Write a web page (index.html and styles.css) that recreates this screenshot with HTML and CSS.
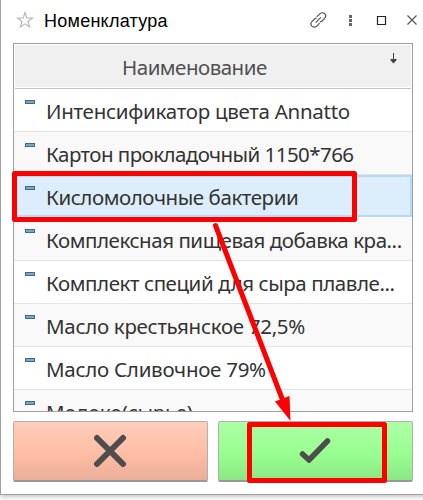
FILE: index.html
```html
<!DOCTYPE html>
<html lang="ru">
<head>
<meta charset="utf-8">
<title>Номенклатура</title>
<link rel="stylesheet" href="styles.css">
</head>
<body>
<main class="window">
  <header class="titlebar">
    <svg class="star" width="18" height="18" viewBox="0 0 18 18"><path d="M9 1.500l1.800 5.400 5.700.1-4.500 3.500 1.600 5.500L9 12.800 4.400 16 6 10.500 1.500 7 7.200 6.900z"/></svg>
    <h1 class="title">Номенклатура</h1>
    <svg class="tools" width="108" height="20" viewBox="0 0 108 20">
      <g class="link"><path d="M6.800 6.800l2.700-2.700c1.400-1.400 3.800-1.700 5.200-.4 1.300 1.400 1.100 3.500-.3 4.900l-2.400 2.400c-.7.6-1.400.9-2.200.9"/><path d="M9.700 13.200L7 15.900c-1.400 1.400-3.800 1.600-5.100.3-1.300-1.400-1.200-3.500.2-4.900L4.500 9c.7-.6 1.400-.9 2.200-.9"/><path d="M5.600 12.600l5.200-5.200"/></g>
      <path class="dots" d="M39 5h3v3h-3zM39 9h3v3h-3zM39 13h3v3h-3z"/>
      <path class="box" d="M67.500 6.500h8v8h-8z"/>
      <path class="close" d="M97.500 5.500l9 9M106.500 5.500l-9 9"/>
    </svg>
  </header>
  <section class="table">
    <div class="head"><span class="t h">Наименование</span>
      <svg class="sort" width="7" height="11" viewBox="0 0 7 11"><path d="M3 0h1v6h2.500v1.200L3.500 10.500.5 7.200V6H3z"/></svg>
    </div>
    <div class="row"><i class="mark"></i><span class="t r1">Интенсификатор цвета Annatto</span></div>
    <div class="row"><i class="mark"></i><span class="t r2">Картон прокладочный 1150*766</span></div>
    <div class="row selected"><i class="mark"></i><span class="t r3">Кисломолочные бактерии</span></div>
    <div class="row"><i class="mark"></i><span class="t r4">Комплексная пищевая добавка кра...</span></div>
    <div class="row"><i class="mark"></i><span class="t r5">Комплект специй для сыра плавле...</span></div>
    <div class="row"><i class="mark"></i><span class="t r6">Масло крестьянское 72,5%</span></div>
    <div class="row"><i class="mark"></i><span class="t r7">Масло Сливочное 79%</span></div>
    <div class="row"><i class="mark"></i><span class="t r8">Молоко(сырье)</span></div>
  </section>
  <footer class="actions">
    <button class="btn cancel" aria-label="Отмена"><svg width="34" height="34" viewBox="0 0 34 34"><path class="x" d="M3 4l26 26M29 4L3 30"/></svg></button>
    <button class="btn ok" aria-label="Выбрать"><svg width="34" height="28" viewBox="0 0 34 28"><path class="v" d="M3.500 17l6.500 6L28.500 4"/></svg></button>
  </footer>
</main>
<svg class="notes" width="423" height="500" viewBox="0 0 423 500">
  <rect x="14.500" y="173.500" width="340" height="46"/>
  <rect x="249.500" y="424.500" width="135" height="56"/>
  <path class="shaft" d="M215.500 225.500L283 401"/>
  <path class="tip" d="M275 401.500L289.500 396 290.500 421z"/>
</svg>
</body>
</html>
```
FILE: styles.css
```css
* { box-sizing: border-box; }
body { margin: 0; width: 423px; height: 500px; overflow: hidden; background: #fff; font-family: "Noto Sans", sans-serif; }
.window { width: 440px; height: 495px; border-left: 1px solid #a0a0a0; border-bottom: 1px solid #a0a0a0; box-shadow: 0 1px 6px rgba(0,0,0,.3); background: #fff; padding-left: 12px; }
.titlebar { display: flex; height: 43px; align-items: flex-start; }
.star { margin: 11px 0 0 3px; fill: none; stroke: #b2b5bb; stroke-width: 1.1; }
.title { margin: 9px 0 0 10px; width: 230px; font: 18px/24px "Liberation Sans", Arial, sans-serif; color: #000; white-space: nowrap; letter-spacing: .25px; }
.tools { margin: 10px 0 0 36px; flex: none; fill: none; }
.link, .close { stroke: #555; stroke-width: 1.2; }
.dots { fill: #666; }
.box { stroke: #222; stroke-width: 1.2; }
.table { width: 400px; height: 369px; border: 1px solid #a0a0a0; overflow: hidden; }
.head { display: flex; height: 45px; border: 1px solid #fff; border-bottom: 0; background: #f0f0f0; box-shadow: inset 0 -1px #c4c4c4, inset 0 -2px #fff; padding-left: 107px; }
.t { white-space: nowrap; font-size: 20.500px; line-height: 30px; color: #333; }
.h { margin-top: 7px; width: 268px; flex: none; color: #505050; letter-spacing: -.5px; }
.r1 { letter-spacing: -.27px; }
.r2 { letter-spacing: -.56px; }
.r3 { letter-spacing: -.43px; }
.r4 { letter-spacing: -.45px; }
.r5 { letter-spacing: -.43px; }
.r6 { letter-spacing: -.3px; }
.r7 { letter-spacing: -.27px; }
.r8 { letter-spacing: -.3px; }
.sort { margin-top: 8px; fill: #444; }
.row { display: flex; height: 43px; border-bottom: 1px solid #e3e3e3; padding: 7px 0 0 32px; position: relative; }
.row:nth-child(odd) { background: #f9f9f9; }
.row.selected { background: #dceefc; box-shadow: inset 0 0 0 2px #b5dafa; border-bottom-color: #fff; }
.mark { position: absolute; left: 11px; top: 11px; width: 10px; height: 4px; background: #78a9cd; border: 1px solid #456983; }
.actions { display: flex; gap: 10px; margin-top: 9px; }
.btn { display: flex; align-items: center; justify-content: center; width: 195px; height: 61px; padding: 0; border: 1px solid #b0b0b0; border-bottom: 2px solid #999; border-radius: 2px; }
.cancel { background: linear-gradient(#ffceba, #ffbda4 55%, #eaae98); }
.ok { background: linear-gradient(#adffa6, #98ff91 55%, #8ce783); }
.x, .v { fill: none; stroke: #4d4d4d; stroke-width: 6; stroke-linecap: round; stroke-linejoin: round; }
.v { stroke-width: 5.500; }
.notes { position: absolute; left: 0; top: 0; fill: none; stroke: #f00; stroke-width: 5; stroke-linejoin: round; }
.shaft { stroke-linecap: round; }
.tip { fill: #f00; stroke: none; }
```
